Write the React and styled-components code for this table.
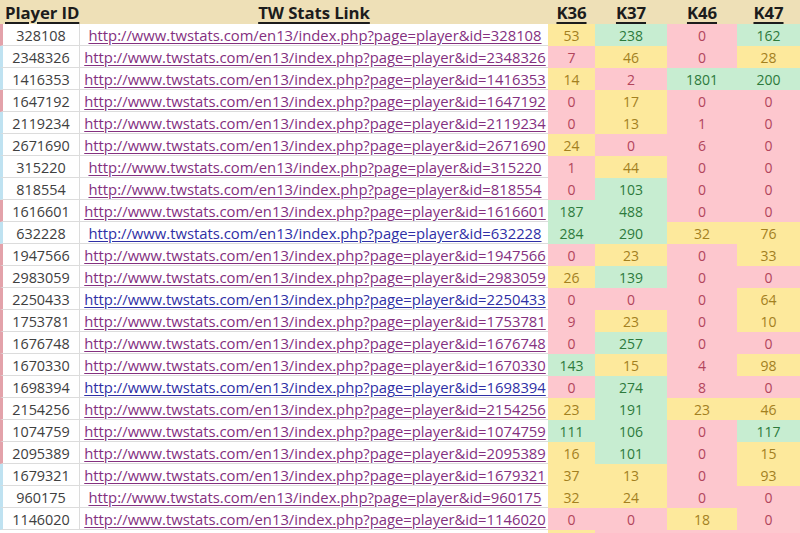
import styled, { createGlobalStyle } from 'styled-components'

const GlobalStyle = createGlobalStyle`
  body {
    margin: 0;
    background: #fff;
    overflow: hidden;
  }
`

const levels = {
  low: { bg: '#fdc7ce', fg: '#b2455c' },
  mid: { bg: '#fde99c', fg: '#a3801f' },
  high: { bg: '#c7edd1', fg: '#2d7a3c' },
}

const levelOf = (v) => (v >= 100 ? 'high' : v >= 10 ? 'mid' : 'low')

const markers = { r: '#e3a2aa', b: '#bfe2f1' }

const rows = [
  ['328108', 'r', true, 53, 238, 0, 162],
  ['2348326', 'b', true, 7, 46, 0, 28],
  ['1416353', 'b', true, 14, 2, 1801, 200],
  ['1647192', 'r', true, 0, 17, 0, 0],
  ['2119234', 'b', true, 0, 13, 1, 0],
  ['2671690', 'b', true, 24, 0, 6, 0],
  ['315220', 'b', true, 1, 44, 0, 0],
  ['818554', 'b', true, 0, 103, 0, 0],
  ['1616601', 'r', true, 187, 488, 0, 0],
  ['632228', 'b', false, 284, 290, 32, 76],
  ['1947566', 'r', true, 0, 23, 0, 33],
  ['2983059', 'r', true, 26, 139, 0, 0],
  ['2250433', 'r', false, 0, 0, 0, 64],
  ['1753781', 'r', true, 9, 23, 0, 10],
  ['1676748', 'r', true, 0, 257, 0, 0],
  ['1670330', 'r', true, 143, 15, 4, 98],
  ['1698394', 'r', false, 0, 274, 8, 0],
  ['2154256', 'r', true, 23, 191, 23, 46],
  ['1074759', 'r', true, 111, 106, 0, 117],
  ['2095389', 'r', true, 16, 101, 0, 15],
  ['1679321', 'b', true, 37, 13, 0, 93],
  ['960175', 'b', true, 32, 24, 0, 0],
  ['1146020', 'b', true, 0, 0, 18, 0],
]

const Sheet = styled.div`
  display: grid;
  grid-template-columns: 80px 468px 47px 72px 70px 63px;
  grid-template-rows: 24px;
  grid-auto-rows: 22px;
  width: 800px;
  font-family: 'Open Sans', sans-serif;
`

const HeadCell = styled.div`
  display: flex;
  align-items: center;
  justify-content: ${({ $left }) => ($left ? 'flex-start' : 'center')};
  padding-left: ${({ $left }) => ($left ? '5px' : '0')};
  background: #eee0b7;
  color: #1c1c1c;
  font-size: 16.8px;
  font-weight: 700;
  letter-spacing: -0.1px;
  text-decoration: underline;
  text-decoration-thickness: 2px;
  text-underline-offset: 3px;
  white-space: nowrap;
`

const IdCell = styled.div`
  display: flex;
  align-items: center;
  justify-content: center;
  box-sizing: border-box;
  border-left: 3px solid ${({ $marker }) => $marker};
  border-right: 1px solid #dcdcdc;
  border-bottom: 1px solid #dcdcdc;
  padding-top: 1px;
  color: #404040;
  font-size: 14.4px;
`

const LinkCell = styled.div`
  display: flex;
  align-items: center;
  justify-content: center;
  box-sizing: border-box;
  border-bottom: 1px solid #dcdcdc;
  padding: 1px 0 0 2px;
  white-space: nowrap;
  overflow: hidden;
`

const Link = styled.a`
  color: ${({ $visited }) => ($visited ? '#84307f' : '#2f2fa6')};
  font-size: 14.8px;
  text-decoration: underline;
  text-underline-offset: 2px;
`

const ValueCell = styled.div`
  display: flex;
  align-items: center;
  justify-content: center;
  padding-top: 1px;
  background: ${({ $level }) => levels[$level].bg};
  color: ${({ $level }) => levels[$level].fg};
  font-size: 14px;
`

const Blank = styled.div`
  background: ${({ $level }) => ($level ? levels[$level].bg : '#fff')};
`

const App = () => (
  <>
    <GlobalStyle />
    <Sheet>
      <HeadCell $left>Player ID</HeadCell>
      <HeadCell>TW Stats Link</HeadCell>
      <HeadCell>K36</HeadCell>
      <HeadCell>K37</HeadCell>
      <HeadCell>K46</HeadCell>
      <HeadCell>K47</HeadCell>

      {rows.map(([id, marker, visited, ...values]) => {
        const url = `http://www.twstats.com/en13/index.php?page=player&id=${id}`
        return [
          <IdCell key={`${id}-id`} $marker={markers[marker]}>{id}</IdCell>,
          <LinkCell key={`${id}-link`}>
            <Link href={url} $visited={visited}>{url}</Link>
          </LinkCell>,
          ...values.map((v, i) => (
            <ValueCell key={`${id}-${i}`} $level={levelOf(v)}>{v}</ValueCell>
          )),
        ]
      })}

      <Blank />
      <Blank />
      <Blank $level="mid" />
      <Blank $level="low" />
      <Blank $level="low" />
      <Blank $level="low" />
    </Sheet>
  </>
)

export default App
